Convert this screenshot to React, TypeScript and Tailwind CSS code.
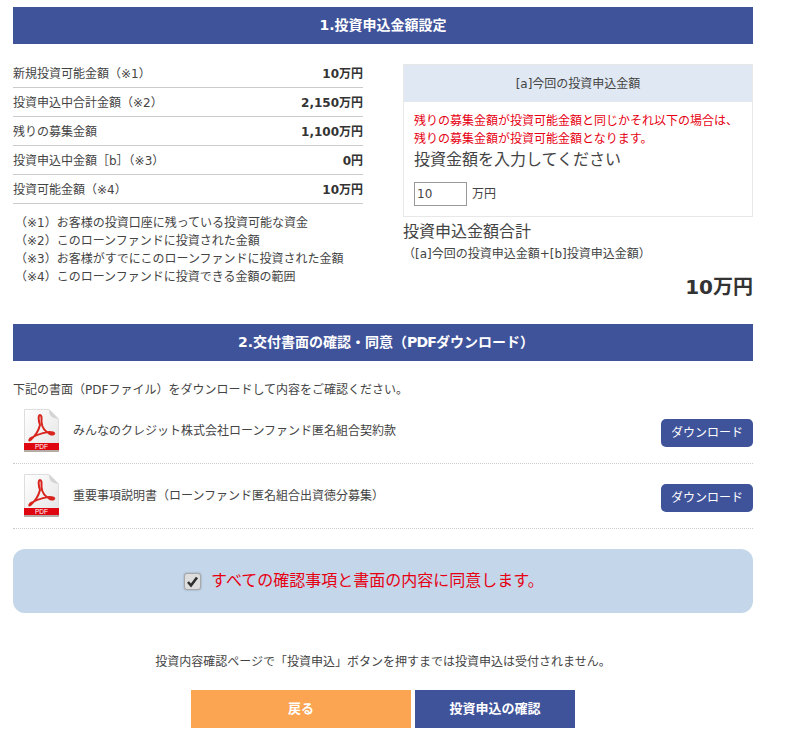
const rows = [
  { label: "新規投資可能金額（※1）", value: "10万円" },
  { label: "投資申込中合計金額（※2）", value: "2,150万円" },
  { label: "残りの募集金額", value: "1,100万円" },
  { label: "投資申込中金額［b］（※3）", value: "0円" },
  { label: "投資可能金額（※4）", value: "10万円" },
];

const notes = [
  "（※1）お客様の投資口座に残っている投資可能な資金",
  "（※2）このローンファンドに投資された金額",
  "（※3）お客様がすでにこのローンファンドに投資された金額",
  "（※4）このローンファンドに投資できる金額の範囲",
];

const docs = [
  "みんなのクレジット株式会社ローンファンド匿名組合契約款",
  "重要事項説明書（ローンファンド匿名組合出資徳分募集）",
];

function PdfIcon({ id }: { id: string }) {
  return (
    <svg width="36" height="44" viewBox="0 0 36 44" className="shrink-0">
      <defs>
        <linearGradient id={id} x1="0" y1="0" x2="1" y2="1">
          <stop offset="0" stopColor="#ffffff" />
          <stop offset="1" stopColor="#e4e4e4" />
        </linearGradient>
      </defs>
      <path d="M0.5 0.5H25L34.5 10V41H0.5Z" fill={`url(#${id})`} stroke="#dedede" />
      <path d="M25 0.5C25.5 6 26 9 34.5 10C31 6 28 3 25 0.5Z" fill="#d4d4d4" />
      <rect x="0" y="34" width="35" height="7" fill="#e00610" />
      <rect x="0" y="41" width="35" height="2" fill="#b5aca6" />
      <path
        d="M16 6C14 6 14.5 12 16 16C14.5 22 10 28 6.5 31C4.5 32.5 5 30 8 28.500C14 25 24 22 29 23.500C32 24.500 29 26.500 26 25C22 23 18 19 17.500 13C17.500 10 18 6 16 6Z"
        fill="none"
        stroke="#d8241c"
        strokeWidth="2"
      />
      <text x="17.500" y="40" textAnchor="middle" fontSize="6.500" fill="#ffffff" fontFamily="'Liberation Sans', sans-serif">
        PDF
      </text>
    </svg>
  );
}

function SectionTitle({ children }: { children: React.ReactNode }) {
  return (
    <h2 className="flex h-[37px] items-center justify-center bg-[#3f539b] text-[14px] font-bold text-white">
      <span>{children}</span>
    </h2>
  );
}

export default function App() {
  return (
    <main
      className="h-[729px] overflow-hidden bg-white pt-[7px] pl-[13px] text-[12px] text-[#444444]"
      style={{ fontFamily: "'DejaVu Sans', 'Noto Sans CJK JP', sans-serif" }}
    >
      <div className="w-[740px]">
        <SectionTitle>1.投資申込金額設定</SectionTitle>

        <div className="mt-[15px] flex justify-between">
          <div className="w-[350px]">
            {rows.map((row) => (
              <div
                key={row.label}
                className="flex h-[29px] items-center justify-between border-b border-[#cccccc] pt-px"
              >
                <span>{row.label}</span>
                <span className="font-bold text-[#333333]">{row.value}</span>
              </div>
            ))}
            <ul className="mt-[10px] pl-[2px] leading-[18px]">
              {notes.map((note) => (
                <li key={note}>{note}</li>
              ))}
            </ul>
          </div>

          <div className="mt-[5px] w-[350px]">
            <div className="border border-[#e8e8e8]">
              <div className="flex h-[37px] items-center justify-center bg-[#e0e9f3]">
                [a]今回の投資申込金額
              </div>
              <div className="h-[114px] px-[10px] pt-[10px]">
                <p className="leading-[18px] text-[#e60012]">
                  残りの募集金額が投資可能金額と同じかそれ以下の場合は、
                  <br />
                  残りの募集金額が投資可能金額となります。
                </p>
                <p className="text-[16px] leading-[24px]">投資金額を入力してください</p>
                <div className="mt-[10px] flex items-center gap-[5px]">
                  <input
                    defaultValue="10"
                    className="h-[24px] w-[53px] border border-[#999999] px-[2px] text-[12px] text-[#444444] outline-none"
                  />
                  <span>万円</span>
                </div>
              </div>
            </div>
            <p className="mt-[4px] text-[16px] leading-[22px]">投資申込金額合計</p>
            <p className="mt-[2px] leading-[18px]">（[a]今回の投資申込金額+[b]投資申込金額）</p>
            <p className="mt-[10px] text-right text-[20px] leading-[28px] font-bold text-[#333333]">10万円</p>
          </div>
        </div>

        <div className="mt-[23px]">
          <SectionTitle>
            <span className="pl-[6px]">
              2.交付書面の確認・同意（<span className="tracking-[-0.8px]">PDF</span>ダウンロード）
            </span>
          </SectionTitle>
        </div>

        <p className="mt-[20px] leading-[18px]">下記の書面（PDFファイル）をダウンロードして内容をご確認ください。</p>

        <div>
          {docs.map((doc, i) => (
            <div
              key={doc}
              className="flex h-[65px] items-center border-b border-dotted border-[#cccccc] pl-[11px]"
            >
              <PdfIcon id={`pdf-page-${i}`} />
              <span className="mb-px ml-[13px] flex-1">{doc}</span>
              <button className="mt-[3px] h-[28px] w-[92px] rounded-[5px] bg-[#3f539b] text-[12px] text-white">
                ダウンロード
              </button>
            </div>
          ))}
        </div>

        <label className="mt-[20px] flex h-[64px] items-center gap-[10px] rounded-[12px] bg-[#c3d6ea] pl-[171px] text-[16px] text-[#e60012]">
          <input type="checkbox" defaultChecked className="sr-only" />
          <span className="flex h-[17px] w-[17px] items-center justify-center rounded-[3px] border border-[#a8a8a8] bg-[#dedede] shadow-[0_0_2px_rgba(0,0,0,0.3)]">
            <svg width="13" height="13" viewBox="0 0 13 13">
              <path d="M2 7L5 10.500L11 2.500" fill="none" stroke="#2f2f2f" strokeWidth="2.600" />
            </svg>
          </span>
          すべての確認事項と書面の内容に同意します。
        </label>

        <p className="mt-[40px] text-center leading-[18px]">
          投資内容確認ページで「投資申込」ボタンを押すまでは投資申込は受付されません。
        </p>

        <div className="mt-[19px] flex justify-center gap-[4px]">
          <button className="h-[38px] w-[220px] bg-[#fba552] text-[13px] font-bold text-white">戻る</button>
          <button className="h-[38px] w-[160px] bg-[#3f539b] text-[13px] font-bold text-white">投資申込の確認</button>
        </div>
      </div>
    </main>
  );
}
